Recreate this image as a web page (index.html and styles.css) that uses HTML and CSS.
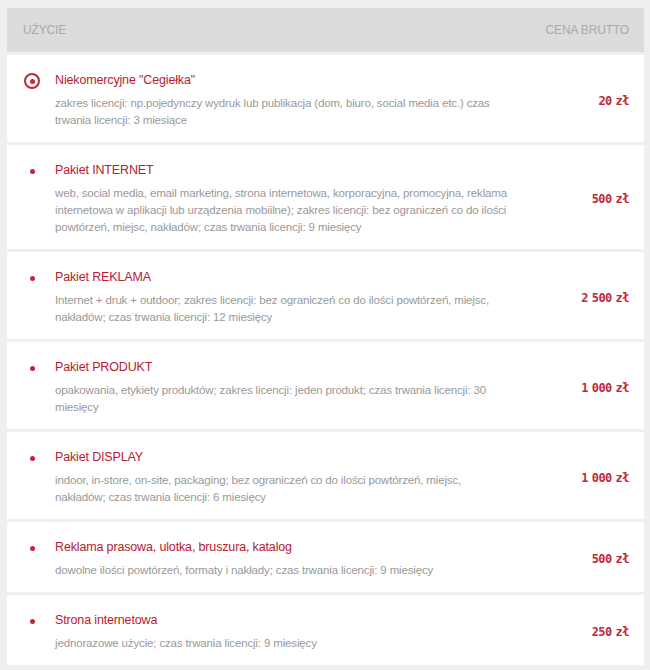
FILE: index.html
```html
<!DOCTYPE html>
<html lang="pl">
<head>
<meta charset="utf-8">
<link rel="stylesheet" href="styles.css">
</head>
<body>
<div class="table">
  <div class="head">
    <span>Użycie</span>
    <span>Cena brutto</span>
  </div>

  <div class="row">
    <div class="mark"><span class="radio"></span></div>
    <div class="body">
      <div class="title">Niekomercyjne "Cegiełka"</div>
      <div class="desc">zakres licencji: np.pojedynczy wydruk lub publikacja (dom, biuro, social media etc.) czas trwania licencji: 3 miesiące</div>
    </div>
    <div class="price">20 zł</div>
  </div>

  <div class="row">
    <div class="mark"><span class="dot"></span></div>
    <div class="body">
      <div class="title">Pakiet INTERNET</div>
      <div class="desc">web, social media, email marketing, strona internetowa, korporacyjna, promocyjna, reklama internetowa w aplikacji lub urządzenia mobiilne); zakres licencji: bez ograniczeń co do ilości powtórzeń, miejsc, nakładów; czas trwania licencji: 9 miesięcy</div>
    </div>
    <div class="price">500 zł</div>
  </div>

  <div class="row">
    <div class="mark"><span class="dot"></span></div>
    <div class="body">
      <div class="title">Pakiet REKLAMA</div>
      <div class="desc">Internet + druk + outdoor; zakres licencji: bez ograniczeń co do ilości powtórzeń, miejsc, nakładów; czas trwania licencji: 12 miesięcy</div>
    </div>
    <div class="price">2 500 zł</div>
  </div>

  <div class="row">
    <div class="mark"><span class="dot"></span></div>
    <div class="body">
      <div class="title">Pakiet PRODUKT</div>
      <div class="desc">opakowania, etykiety produktów; zakres licencji: jeden produkt; czas trwania licencji: 30 miesięcy</div>
    </div>
    <div class="price">1 000 zł</div>
  </div>

  <div class="row">
    <div class="mark"><span class="dot"></span></div>
    <div class="body">
      <div class="title">Pakiet DISPLAY</div>
      <div class="desc">indoor, in-store, on-site, packaging; bez ograniczeń co do ilości powtórzeń, miejsc, nakładów; czas trwania licencji: 6 miesięcy</div>
    </div>
    <div class="price">1 000 zł</div>
  </div>

  <div class="row">
    <div class="mark"><span class="dot"></span></div>
    <div class="body">
      <div class="title">Reklama prasowa, ulotka, bruszura, katalog</div>
      <div class="desc">dowolne ilości powtórzeń, formaty i nakłady; czas trwania licencji: 9 miesięcy</div>
    </div>
    <div class="price">500 zł</div>
  </div>

  <div class="row">
    <div class="mark"><span class="dot"></span></div>
    <div class="body">
      <div class="title">Strona internetowa</div>
      <div class="desc">jednorazowe użycie; czas trwania licencji: 9 miesięcy</div>
    </div>
    <div class="price">250 zł</div>
  </div>
</div>
</body>
</html>
```

FILE: styles.css
```css
html, body {
  margin: 0;
  padding: 0;
  background: #efefef;
}
body {
  font-family: "Liberation Sans", Arial, sans-serif;
  font-size: 11.5px;
  letter-spacing: -0.15px;
  color: #999;
}
.table {
  padding: 8px 6px 4px 7px;
  display: flex;
  flex-direction: column;
  gap: 3px;
}
.head {
  height: 44px;
  background: #dcdcdc;
  display: flex;
  align-items: center;
  justify-content: space-between;
  padding: 0 15px 0 16px;
  text-transform: uppercase;
  color: #a9a9a9;
  font-size: 12px;
}
.row {
  background: #fff;
  display: flex;
  align-items: center;
  padding: 17px 15px 13px 0;
}
.mark {
  width: 48px;
  align-self: flex-start;
  display: flex;
  justify-content: center;
  padding-top: 1px;
  flex: none;
}
.radio {
  width: 12px;
  height: 12px;
  border: 2px solid #c0283a;
  border-radius: 50%;
  display: flex;
  align-items: center;
  justify-content: center;
  margin-left: 2px;
}
.radio::after {
  content: "";
  width: 5px;
  height: 5px;
  border-radius: 50%;
  background: #c0283a;
}
.dot {
  width: 5px;
  height: 5px;
  border-radius: 50%;
  background: #c0283a;
  margin-top: 6px;
  margin-left: 2px;
}
.body {
  flex: 1;
  padding-right: 40px;
}
.title {
  color: #b8202f;
  font-size: 12.5px;
  line-height: 17px;
  margin-bottom: 6px;
}
.desc {
  line-height: 17px;
  max-width: 456px;
}
.price {
  flex: none;
  color: #c0283a;
  font-family: "DejaVu Sans Mono", monospace;
  font-weight: bold;
  font-size: 12px;
  letter-spacing: -0.5px;
  word-spacing: -3px;
}
```
